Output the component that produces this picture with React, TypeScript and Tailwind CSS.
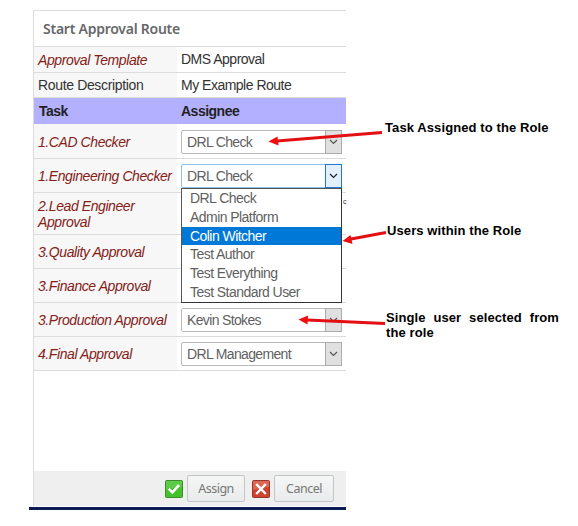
import React from "react";

const ARIAL = "font-['Liberation_Sans',Arial,sans-serif]";

function Chevron({ color }: { color: string }) {
  return (
    <svg width="9" height="6" viewBox="0 0 9 6" fill="none">
      <path d="M1 1l3.5 3.4L8 1" stroke={color} strokeWidth="1.2" />
    </svg>
  );
}

function Select({ value, open = false }: { value: string; open?: boolean }) {
  return (
    <div
      className={`flex h-6 w-[161px] items-stretch rounded-[2px] border bg-white ${
        open ? "border-[#8ebfe8]" : "border-[#b9b9b9]"
      }`}
    >
      <span className="flex-1 pl-[5px] text-[14px] leading-[22px] tracking-[-0.65px] whitespace-nowrap text-[#5f5f5f]">
        {value}
      </span>
      <span
        className={`-my-px -mr-px flex w-[17px] items-center justify-center border ${
          open ? "border-[#1f7ad0] bg-[#e3f0fb]" : "border-[#acacac] bg-[#e0e0e0]"
        }`}
      >
        <Chevron color={open ? "#222" : "#555"} />
      </span>
    </div>
  );
}

function Row({
  label,
  height,
  labelClass,
  children,
}: {
  label: React.ReactNode;
  height: string;
  labelClass: string;
  children?: React.ReactNode;
}) {
  return (
    <div className={`flex border-b border-[#dcdcdc] ${height}`}>
      <div
        className={`flex w-[143px] shrink-0 items-center bg-[#f7f7f7] pl-1 text-[14px] leading-4 whitespace-nowrap ${labelClass}`}
      >
        <span>{label}</span>
      </div>
      <div className="relative flex flex-1 items-center pl-1 text-[14px] tracking-[-0.5px] whitespace-nowrap text-[#333]">
        {children}
      </div>
    </div>
  );
}

const red = "italic tracking-[-0.42px] text-[#842016]";

const options = [
  "DRL Check",
  "Admin Platform",
  "Colin Witcher",
  "Test Author",
  "Test Everything",
  "Test Standard User",
];

function Options() {
  return (
    <div className="absolute top-[29px] left-1 z-10 h-[115px] w-[161px] border border-[#555] border-r-[#333] border-b-[#333] bg-white">
      {options.map((name) => (
        <div
          key={name}
          className={`h-[18.8px] pl-2 text-[14px] leading-[19px] tracking-[-0.55px] ${
            name === "Colin Witcher" ? "bg-[#0078d7] text-white" : "text-[#5f5f5f]"
          }`}
        >
          {name}
        </div>
      ))}
    </div>
  );
}

function FooterButton({ children, width }: { children: string; width: string }) {
  return (
    <button
      className={`h-[27px] rounded-[2px] border border-[#c3c6c9] bg-linear-to-b from-[#f5f5f5] to-[#e9ecec] pt-0.5 font-['Noto_Sans',sans-serif] text-[12.5px] tracking-[-0.5px] text-[#777] ${width}`}
    >
      {children}
    </button>
  );
}

export default function App() {
  return (
    <div className={`relative flex h-[526px] w-[578px] overflow-hidden bg-white ${ARIAL}`}>
      <div className="ml-[29px] w-[317px] pt-[10px]">
        <section className="ml-1 flex h-[496px] flex-col border-t border-l border-[#dcdcdc]">
          <h1 className="h-9 shrink-0 border-b border-[#dcdcdc] pl-[9px] font-['Noto_Sans',sans-serif] text-[14px] leading-[36px] font-semibold tracking-[-0.25px] text-[#66686a]">
            Start Approval Route
          </h1>
          <Row height="h-[26px]" label="Approval Template" labelClass={red}>
            DMS Approval
          </Row>
          <Row height="h-[25px]" label="Route Description" labelClass="tracking-[-0.35px] text-[#333]">
            My Example Route
          </Row>
          <div className="flex h-[26px] shrink-0 items-center bg-[#b3b0ff] pt-px text-[14px] font-bold tracking-[-0.5px] text-[#222]">
            <span className="w-[143px] pl-[5px]">Task</span>
            <span className="pl-1">Assignee</span>
          </div>
          <Row height="h-[35px]" label="1.CAD Checker" labelClass={`pt-px ${red}`}>
            <div className="pt-px">
              <Select value="DRL Check" />
            </div>
          </Row>
          <Row height="h-[34px]" label="1.Engineering Checker" labelClass={red}>
            <Select value="DRL Check" open />
            <Options />
          </Row>
          <Row
            height="h-[42px]"
            labelClass={red}
            label={
              <>
                2.Lead Engineer
                <br />
                Approval
              </>
            }
          >
            <span className="mb-6 ml-[162px] text-[7px] leading-none tracking-normal">c</span>
          </Row>
          <Row height="h-[34px]" label="3.Quality Approval" labelClass={red} />
          <Row height="h-[34px]" label="3.Finance Approval" labelClass={red} />
          <Row height="h-[34px]" label="3.Production Approval" labelClass={red}>
            <Select value="Kevin Stokes" />
          </Row>
          <Row height="h-[34px]" label="4.Final Approval" labelClass={red}>
            <Select value="DRL Management" />
          </Row>
          <footer className="mt-auto flex h-[35px] shrink-0 items-center bg-[#efefef] pl-[131px]">
            <svg width="18" height="18" viewBox="0 0 18 18">
              <rect x=".5" y=".5" width="17" height="17" rx="1" fill="#43c22d" stroke="#3b8c2b" />
              <path d="M1 1h16v6Q9 7 1 10z" fill="#72d45d" opacity=".55" />
              <path d="M3.800 8.800l3.600 3.600L14 5.200" fill="none" stroke="#fff" strokeWidth="2.6" />
            </svg>
            <div className="ml-1 flex">
              <FooterButton width="w-[58px]">Assign</FooterButton>
            </div>
            <svg className="ml-[7px]" width="18" height="18" viewBox="0 0 18 18">
              <rect x=".5" y=".5" width="17" height="17" rx="1" fill="#cf432e" stroke="#98382c" />
              <path d="M1 1h16v6Q9 7 1 10z" fill="#e78370" opacity=".55" />
              <path d="M4.200 4l9.600 10m0-10l-9.600 10" stroke="#fff" strokeWidth="2.5" />
            </svg>
            <div className="ml-1 flex">
              <FooterButton width="w-[60px]">Cancel</FooterButton>
            </div>
          </footer>
        </section>
        <div className="mt-px h-[3px] bg-[#0a1a52]" />
      </div>

      <aside className="ml-[39px] flex w-[180px] flex-col pt-[120px] text-[13px] leading-[15px] font-bold tracking-[0.1px] text-black">
        <p className="whitespace-nowrap">Task Assigned to the Role</p>
        <p className="mt-[88px] ml-0.5 whitespace-nowrap">Users within the Role</p>
        <p className="mt-[72px] ml-px w-[173px] text-justify">Single user selected from the role</p>
      </aside>

      <svg className="pointer-events-none absolute inset-0 z-20" width="578" height="526" viewBox="0 0 578 526">
        <g stroke="#e30f13" strokeWidth="3">
          <path d="M277 141L382 132.5" />
          <path d="M351 239L386 232.5" />
          <path d="M307 320L385 323.5" />
        </g>
        <g fill="#f00d0d">
          <path d="M268.500 141.500L277.500 136.500L278.500 145.500Z" />
          <path d="M342.500 241L350.500 235L352.500 244Z" />
          <path d="M298.500 319.500L308 315.500L307.500 324.500Z" />
        </g>
      </svg>
    </div>
  );
}
